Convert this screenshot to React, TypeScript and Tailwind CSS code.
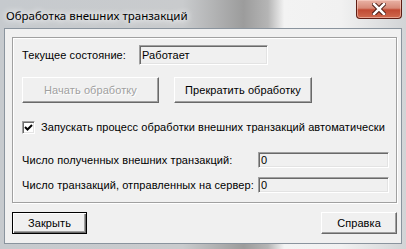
import React from 'react';

const ui = "font-['Liberation_Sans',Arial,sans-serif] text-[11px] tracking-[0.08px] text-black leading-none";

const Field: React.FC<{ value: string; className?: string }> = ({ value, className = '' }) => (
  <div
    className={`flex shrink-0 items-center bg-[#f0f0f0] border border-t-[#a0a0a0] border-l-[#a0a0a0] border-b-white border-r-white shadow-[inset_1px_1px_0_#696969,inset_-1px_-1px_0_#e3e3e3] pl-[2px] ${className}`}
  >
    {value}
  </div>
);

const Button: React.FC<{ label: string; disabled?: boolean; isDefault?: boolean; className?: string }> = ({
  label,
  disabled,
  isDefault,
  className = ''
}) => (
  <div
    className={`flex items-center justify-center bg-[#f0f0f0] border ${
      isDefault
        ? 'border-black shadow-[inset_1px_1px_0_#fff,inset_-1px_-1px_0_#696969,inset_-2px_-2px_0_#a0a0a0]'
        : 'border-t-white border-l-white border-b-[#696969] border-r-[#696969] shadow-[inset_-1px_-1px_0_#a0a0a0]'
    } ${disabled ? 'text-[#a0a0a0] [text-shadow:1px_1px_0_#fff]' : 'text-black'} ${className}`}
  >
    {label}
  </div>
);

export default function App() {
  return (
    <div className="w-[406px] h-[249px] overflow-hidden bg-[linear-gradient(90deg,#c6cace_0%,#c9cbcd_45%,#9c9c9c_60%,#b5b5b5_66%,#f3f3f3_70%,#f1f1f1_84%,#d2d4d6_100%)]">
      {/* title bar */}
      <div className="flex h-[28px] items-start">
        <div className="pl-[6px] pt-[10px] font-['Noto_Sans',sans-serif] text-[11.5px] leading-none text-black [text-shadow:0_0_6px_#fff,0_0_8px_#fff]">
          Обработка внешних транзакций
        </div>
        <div className="ml-auto mr-[4px] w-[46px] h-[19px] rounded-b-[4px] border border-t-0 border-[#5e1d14] bg-[linear-gradient(180deg,#e9b3a6_0%,#d78a78_45%,#c14a33_55%,#cf6a4f_100%)] flex items-center justify-center shadow-[inset_0_0_0_1px_rgba(255,220,210,0.5)]">
          <svg width="14" height="12" viewBox="0 0 14 12">
            <path d="M2 1 L12 11 M12 1 L2 11" stroke="#4a1a12" strokeWidth="4.5" strokeLinecap="square" />
            <path d="M2 1 L12 11 M12 1 L2 11" stroke="#fff" strokeWidth="2.5" strokeLinecap="square" />
          </svg>
        </div>
      </div>

      {/* client area */}
      <div className={`mx-[4px] h-[216px] border border-[#8a949e] bg-[#f0f0f0] pl-[7px] pr-[4px] pt-[8px] ${ui}`}>
        <div className="h-[166px] border border-[#a0a0a0] shadow-[inset_1px_1px_0_#fff,1px_1px_0_#fff] pl-[9px] pt-[7px]">
          <div className="flex h-[20px] items-center">
            <span className="w-[117px] shrink-0 whitespace-nowrap">Текущее состояние:</span>
            <Field value="Работает" className="w-[129px] h-[20px]" />
          </div>

          <div className="flex mt-[12px] gap-[15px]">
            <Button label="Начать обработку" disabled className="w-[137px] h-[26px]" />
            <Button label="Прекратить обработку" className="w-[138px] h-[26px]" />
          </div>

          <div className="flex items-center mt-[18px] h-[13px]">
            <div className="w-[13px] h-[13px] bg-white border border-t-[#a0a0a0] border-l-[#a0a0a0] border-b-white border-r-white shadow-[inset_1px_1px_0_#696969,inset_-1px_-1px_0_#e3e3e3] flex items-center justify-center">
              <svg width="9" height="9" viewBox="0 0 9 9">
                <path d="M1 4 L3.5 6.5 L8 2" stroke="#000" strokeWidth="2" fill="none" />
              </svg>
            </div>
            <span className="ml-[6px] whitespace-nowrap">Запускать процесс обработки внешних транзакций автоматически</span>
          </div>

          <div className="flex items-center mt-[18px] h-[16px]">
            <span className="w-[236px] shrink-0 whitespace-nowrap">Число полученных внешних транзакций:</span>
            <Field value="0" className="w-[131px] h-[16px]" />
          </div>
          <div className="flex items-center mt-[9px] h-[16px]">
            <span className="w-[236px] shrink-0 whitespace-nowrap">Число транзакций, отправленных на сервер:</span>
            <Field value="0" className="w-[131px] h-[16px]" />
          </div>
        </div>

        <div className="flex justify-between mt-[9px]">
          <Button label="Закрыть" isDefault className="w-[75px] h-[22px]" />
          <Button label="Справка" className="w-[76px] h-[22px]" />
        </div>
      </div>
    </div>
  );
}
